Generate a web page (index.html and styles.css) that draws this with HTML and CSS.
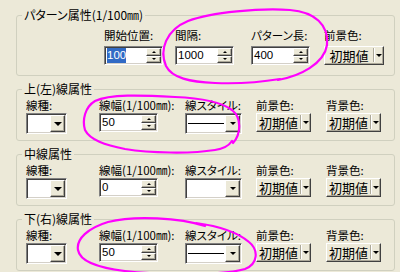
FILE: index.html
```html
<!DOCTYPE html>
<html lang="ja">
<head>
    <meta charset="UTF-8">
    <meta name="viewport" content="width=device-width, initial-scale=1.0">
    <title>線属性</title>
    <link rel="stylesheet" href="styles.css">
</head>
<body>
<div class="panel">

    <!-- パターン属性 -->
    <fieldset class="group pattern">
        <legend>パターン属性(1/100㎜)</legend>
        <div class="row">
            <div class="field start">
                <label>開始位置:</label>
                <div class="spin">
                    <div class="edit"><span class="sel">100</span></div>
                    <div class="spin-btns"><span class="sb"><i class="up"></i></span><span class="sb"><i class="down"></i></span></div>
                </div>
            </div>
            <div class="field interval">
                <label>間隔:</label>
                <div class="spin">
                    <div class="edit">1000</div>
                    <div class="spin-btns"><span class="sb"><i class="up"></i></span><span class="sb"><i class="down"></i></span></div>
                </div>
            </div>
            <div class="field length">
                <label>パターン長:</label>
                <div class="spin">
                    <div class="edit">400</div>
                    <div class="spin-btns"><span class="sb"><i class="up"></i></span><span class="sb"><i class="down"></i></span></div>
                </div>
            </div>
            <div class="field fg wide">
                <label>前景色:</label>
                <div class="cbtn"><span class="cap">初期値</span><span class="sep"></span><span class="arr"><i class="down"></i></span></div>
            </div>
        </div>
    </fieldset>

    <!-- 上(左)線属性 -->
    <fieldset class="group">
        <legend>上(左)線属性</legend>
        <div class="row">
            <div class="field kind">
                <label>線種:</label>
                <div class="combo"><span class="drop"><i class="down big"></i></span></div>
            </div>
            <div class="field width">
                <label>線幅(1/100㎜):</label>
                <div class="spin">
                    <div class="edit">50</div>
                    <div class="spin-btns"><span class="sb"><i class="up"></i></span><span class="sb"><i class="down"></i></span></div>
                </div>
            </div>
            <div class="field style">
                <label>線スタイル:</label>
                <div class="combo"><span class="preview"><b class="line"></b></span><span class="drop"><i class="down"></i></span></div>
            </div>
            <div class="field fg">
                <label>前景色:</label>
                <div class="cbtn"><span class="cap">初期値</span><span class="sep"></span><span class="arr"><i class="down"></i></span></div>
            </div>
            <div class="field bg">
                <label>背景色:</label>
                <div class="cbtn"><span class="cap">初期値</span><span class="sep"></span><span class="arr"><i class="down"></i></span></div>
            </div>
        </div>
    </fieldset>

    <!-- 中線属性 -->
    <fieldset class="group">
        <legend>中線属性</legend>
        <div class="row">
            <div class="field kind">
                <label>線種:</label>
                <div class="combo"><span class="drop"><i class="down big"></i></span></div>
            </div>
            <div class="field width">
                <label>線幅(1/100㎜):</label>
                <div class="spin">
                    <div class="edit">0</div>
                    <div class="spin-btns"><span class="sb"><i class="up"></i></span><span class="sb"><i class="down"></i></span></div>
                </div>
            </div>
            <div class="field style">
                <label>線スタイル:</label>
                <div class="combo"><span class="preview"></span><span class="drop"><i class="down"></i></span></div>
            </div>
            <div class="field fg">
                <label>前景色:</label>
                <div class="cbtn"><span class="cap">初期値</span><span class="sep"></span><span class="arr"><i class="down"></i></span></div>
            </div>
            <div class="field bg">
                <label>背景色:</label>
                <div class="cbtn"><span class="cap">初期値</span><span class="sep"></span><span class="arr"><i class="down"></i></span></div>
            </div>
        </div>
    </fieldset>

    <!-- 下(右)線属性 -->
    <fieldset class="group">
        <legend>下(右)線属性</legend>
        <div class="row">
            <div class="field kind">
                <label>線種:</label>
                <div class="combo"><span class="drop"><i class="down big"></i></span></div>
            </div>
            <div class="field width">
                <label>線幅(1/100㎜):</label>
                <div class="spin">
                    <div class="edit">50</div>
                    <div class="spin-btns"><span class="sb"><i class="up"></i></span><span class="sb"><i class="down"></i></span></div>
                </div>
            </div>
            <div class="field style">
                <label>線スタイル:</label>
                <div class="combo"><span class="preview"><b class="line"></b></span><span class="drop"><i class="down"></i></span></div>
            </div>
            <div class="field fg">
                <label>前景色:</label>
                <div class="cbtn"><span class="cap">初期値</span><span class="sep"></span><span class="arr"><i class="down"></i></span></div>
            </div>
            <div class="field bg">
                <label>背景色:</label>
                <div class="cbtn"><span class="cap">初期値</span><span class="sep"></span><span class="arr"><i class="down"></i></span></div>
            </div>
        </div>
    </fieldset>

    <!-- hand-drawn marks -->
    <svg class="marks" width="400" height="272" viewBox="0 0 400 272">
        <path d="M278 80 C300 76 324 64 327 45 C329 25 315 12 290 10 C260 8 212 12 188 21 C166 30 159 50 166 66 C172 78 190 82 215 83 C240 84 262 82 280 79"/>
        <path d="M233 143 C241 134 242 118 232 110 C220 101 200 98 175 97 C140 95 110 94 95 101 C85 107 82 120 85 130 C90 140 105 145 125 149 C150 153 190 154 215 150 C222 149 228 147 232 141"/>
        <path d="M205 226 C180 218 135 215 108 222 C88 228 76 239 78 250 C80 262 100 268 125 271 C160 275 220 276 245 269 C258 264 259 250 249 242 C236 231 218 226 196 223"/>
    </svg>
</div>
</body>
</html>
```

FILE: styles.css
```css
/* Basic Styles */
body {
    margin: 0;
    background-color: #ece9d8;
    font-family: "Noto Sans CJK JP", sans-serif;
    font-size: 11.5px;
    font-feature-settings: "palt";
    color: #000;
}

.panel {
    position: relative;
    width: 400px;
    height: 272px;
    overflow: hidden;
    box-sizing: border-box;
    padding: 8px 0 0 16px;
}

/* Group boxes */
.group {
    width: 379px;
    min-width: 0;
    box-sizing: border-box;
    margin: 6px 0 0;
    padding: 2px 0 6px;
    border: 1px solid #d0d0bf;
    border-radius: 3px;
}

.group legend {
    margin-left: 5px;
    padding: 0 2px;
    font-size: 12px;
    line-height: 14px;
}

.group.pattern {
    margin-top: 0;
    padding: 6px 0 10px;
}

.row {
    display: flex;
    align-items: flex-start;
}

.field label {
    display: block;
    line-height: 14px;
    white-space: nowrap;
}

.field .spin, .field .combo, .field .cbtn {
    margin-top: 1px;
}

.pattern .field .spin, .pattern .field .cbtn {
    margin-top: 4px;
}

/* field positions */
.start { margin-left: 87px; width: 59px; }
.interval { margin-left: 12px; width: 59px; }
.length { margin-left: 17px; width: 59px; }
.pattern .fg { margin-left: 14px; width: 60px; }

.kind { margin-left: 9px; width: 41px; }
.width { margin-left: 32px; width: 59px; }
.style { margin-left: 27px; width: 57px; }
.fg { margin-left: 14px; width: 55px; }
.bg { margin-left: 15px; width: 55px; }

/* sunken / raised frames */
.spin, .combo {
    display: flex;
    box-sizing: border-box;
    border: 1px solid;
    border-color: #808080 #fff #fff #808080;
    box-shadow: inset 1px 1px #404040, inset -1px -1px #d4d0c8;
    padding: 1px;
    background-color: #fff;
}

.sb, .drop, .cbtn {
    box-sizing: border-box;
    border: 1px solid;
    border-color: #fff #404040 #404040 #fff;
    box-shadow: inset -1px -1px #aca899;
    background-color: #ece9d8;
    display: flex;
    align-items: center;
    justify-content: center;
}

/* spin edit */
.spin {
    height: 19px;
}

.edit {
    flex: 1;
    font-family: "Liberation Sans", Arial, sans-serif;
    font-size: 11.5px;
    line-height: 15px;
    padding-left: 1px;
}

.sel {
    display: inline-block;
    background-color: #316ac5;
    color: #fff;
}

.spin-btns {
    width: 15px;
    display: flex;
    flex-direction: column;
}

.sb {
    flex: 1;
}

/* arrows */
.up, .down {
    display: block;
    width: 0;
    height: 0;
    border-left: 2px solid transparent;
    border-right: 2px solid transparent;
}

.up { border-bottom: 2px solid #000; }
.down { border-top: 2px solid #000; }

.drop .down, .arr .down {
    border-left-width: 3px;
    border-right-width: 3px;
    border-top-width: 3px;
}

.drop .down.big {
    border-left-width: 4px;
    border-right-width: 4px;
    border-top-width: 4px;
}

/* combo box */
.combo {
    height: 21px;
}

.preview {
    flex: 1;
    display: flex;
    align-items: center;
    padding: 0 1px;
}

.line {
    display: block;
    width: 100%;
    height: 1px;
    background-color: #000;
}

.combo .drop {
    margin-left: auto;
    width: 15px;
}

/* colour button */
.cbtn {
    height: 19px;
    justify-content: flex-start;
}

.cap {
    flex: 1;
    text-align: center;
    font-size: 13px;
    line-height: 15px;
}

.sep {
    align-self: stretch;
    width: 1px;
    margin: 1px 0 2px;
    background-color: #aca899;
    border-right: 1px solid #fff;
}

.arr {
    width: 8px;
    display: flex;
    justify-content: center;
}

/* annotation marks */
.marks {
    position: absolute;
    left: 0;
    top: 0;
    pointer-events: none;
}

.marks path {
    fill: none;
    stroke: #f0f;
    stroke-width: 2.2;
    stroke-linecap: round;
}
```
